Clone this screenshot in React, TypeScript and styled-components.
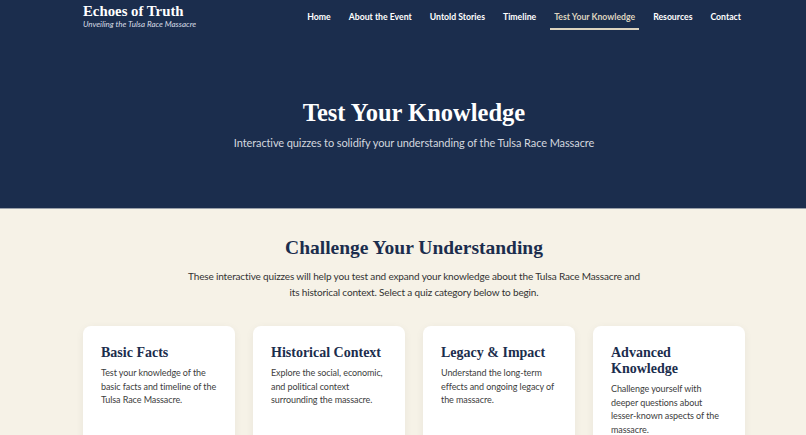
import React from 'react';
import styled, { createGlobalStyle } from 'styled-components';

const navy = '#1b2d4d';
const cream = '#f6f2e7';

const GlobalStyle = createGlobalStyle`
  html, body {
    margin: 0;
    padding: 0;
    background: ${cream};
  }
  body {
    font-family: Lato, "Noto Sans", sans-serif;
  }
  * { box-sizing: border-box; }
`;

const links = [
  'Home',
  'About the Event',
  'Untold Stories',
  'Timeline',
  'Test Your Knowledge',
  'Resources',
  'Contact',
];

const quizzes = [
  {
    title: 'Basic Facts',
    text: 'Test your knowledge of the basic facts and timeline of the Tulsa Race Massacre.',
  },
  {
    title: 'Historical Context',
    text: 'Explore the social, economic, and political context surrounding the massacre.',
  },
  {
    title: 'Legacy & Impact',
    text: 'Understand the long-term effects and ongoing legacy of the massacre.',
  },
  {
    title: 'Advanced Knowledge',
    text: 'Challenge yourself with deeper questions about lesser-known aspects of the massacre.',
  },
];

export default function App() {
  return (
    <>
      <GlobalStyle />
      <Header>
        <Container>
          <HeaderRow>
            <Brand>
              <BrandTitle>Echoes of Truth</BrandTitle>
              <BrandTagline>Unveiling the Tulsa Race Massacre</BrandTagline>
            </Brand>
            <Nav>
              {links.map((l) => (
                <NavLink key={l} $active={l === 'Test Your Knowledge'}>
                  {l}
                </NavLink>
              ))}
            </Nav>
          </HeaderRow>
        </Container>
      </Header>
      <Hero>
        <Container>
          <HeroTitle>Test Your Knowledge</HeroTitle>
          <HeroText>
            Interactive quizzes to solidify your understanding of the Tulsa Race Massacre
          </HeroText>
        </Container>
      </Hero>
      <Section>
        <Container>
          <SectionTitle>Challenge Your Understanding</SectionTitle>
          <Intro>
            These interactive quizzes will help you test and expand your knowledge about the
            Tulsa Race Massacre and its historical context. Select a quiz category below to
            begin.
          </Intro>
          <CardGrid>
            {quizzes.map((q) => (
              <Card key={q.title}>
                <CardTitle>{q.title}</CardTitle>
                <CardText>{q.text}</CardText>
              </Card>
            ))}
          </CardGrid>
        </Container>
      </Section>
    </>
  );
}

const Container = styled.div`
  width: 662px;
  margin-left: calc(50% - 320px);
`;

const Header = styled.header`
  background: ${navy};
  height: 42px;
  padding-top: 3px;
`;

const HeaderRow = styled.div`
  display: flex;
  align-items: flex-start;
  justify-content: space-between;
`;

const Brand = styled.div`
  display: flex;
  flex-direction: column;
`;

const BrandTitle = styled.div`
  font-family: "Liberation Serif", serif;
  font-weight: 700;
  font-size: 14.8px;
  line-height: 16px;
  color: #ffffff;
`;

const BrandTagline = styled.div`
  font-style: italic;
  font-size: 8px;
  line-height: 11px;
  color: #d9dde6;
`;

const Nav = styled.nav`
  display: flex;
  gap: 10px;
  margin-top: 5px;
`;

const NavLink = styled.a<{ $active?: boolean }>`
  display: block;
  padding: 3px 4px 5px;
  font-size: 8.7px;
  font-weight: 700;
  line-height: 12px;
  color: ${({ $active }) => ($active ? '#ddd3bf' : '#ffffff')};
  border-bottom: 2px solid ${({ $active }) => ($active ? '#ddd3bf' : 'transparent')};
  cursor: pointer;
`;

const Hero = styled.section`
  background: ${navy};
  height: 167px;
  padding-top: 56px;
  border-bottom: 1px solid #9aa0aa;
  text-align: center;
`;

const HeroTitle = styled.h1`
  margin: 0;
  font-family: "Liberation Serif", serif;
  font-weight: 700;
  font-size: 24.5px;
  line-height: 30px;
  color: #ffffff;
`;

const HeroText = styled.p`
  margin: 7px 0 0;
  font-size: 11px;
  letter-spacing: -0.1px;
  line-height: 16px;
  color: #d3d7df;
`;

const Section = styled.section`
  background: ${cream};
  padding-top: 27px;
  min-height: 226px;
`;

const SectionTitle = styled.h2`
  margin: 0;
  text-align: center;
  font-family: "Liberation Serif", serif;
  font-weight: 700;
  font-size: 19.5px;
  line-height: 24px;
  color: ${navy};
`;

const Intro = styled.p`
  margin: 8px auto 0;
  max-width: 458px;
  text-align: center;
  font-size: 10px;
  letter-spacing: -0.15px;
  line-height: 16px;
  color: #333333;
`;

const CardGrid = styled.div`
  display: grid;
  grid-template-columns: repeat(4, 1fr);
  gap: 18px;
  margin-top: 26px;
`;

const Card = styled.div`
  background: #ffffff;
  border-radius: 8px;
  box-shadow: 0 2px 8px rgba(0, 0, 0, 0.06);
  padding: 19px 16px 18px 18px;
  min-height: 130px;
`;

const CardTitle = styled.h3`
  margin: 0;
  font-family: "Liberation Serif", serif;
  font-weight: 700;
  font-size: 14px;
  line-height: 16px;
  color: ${navy};
`;

const CardText = styled.p`
  margin: 5px 0 0;
  font-size: 9px;
  letter-spacing: -0.08px;
  line-height: 13.5px;
  color: #3d3d3d;
`;
